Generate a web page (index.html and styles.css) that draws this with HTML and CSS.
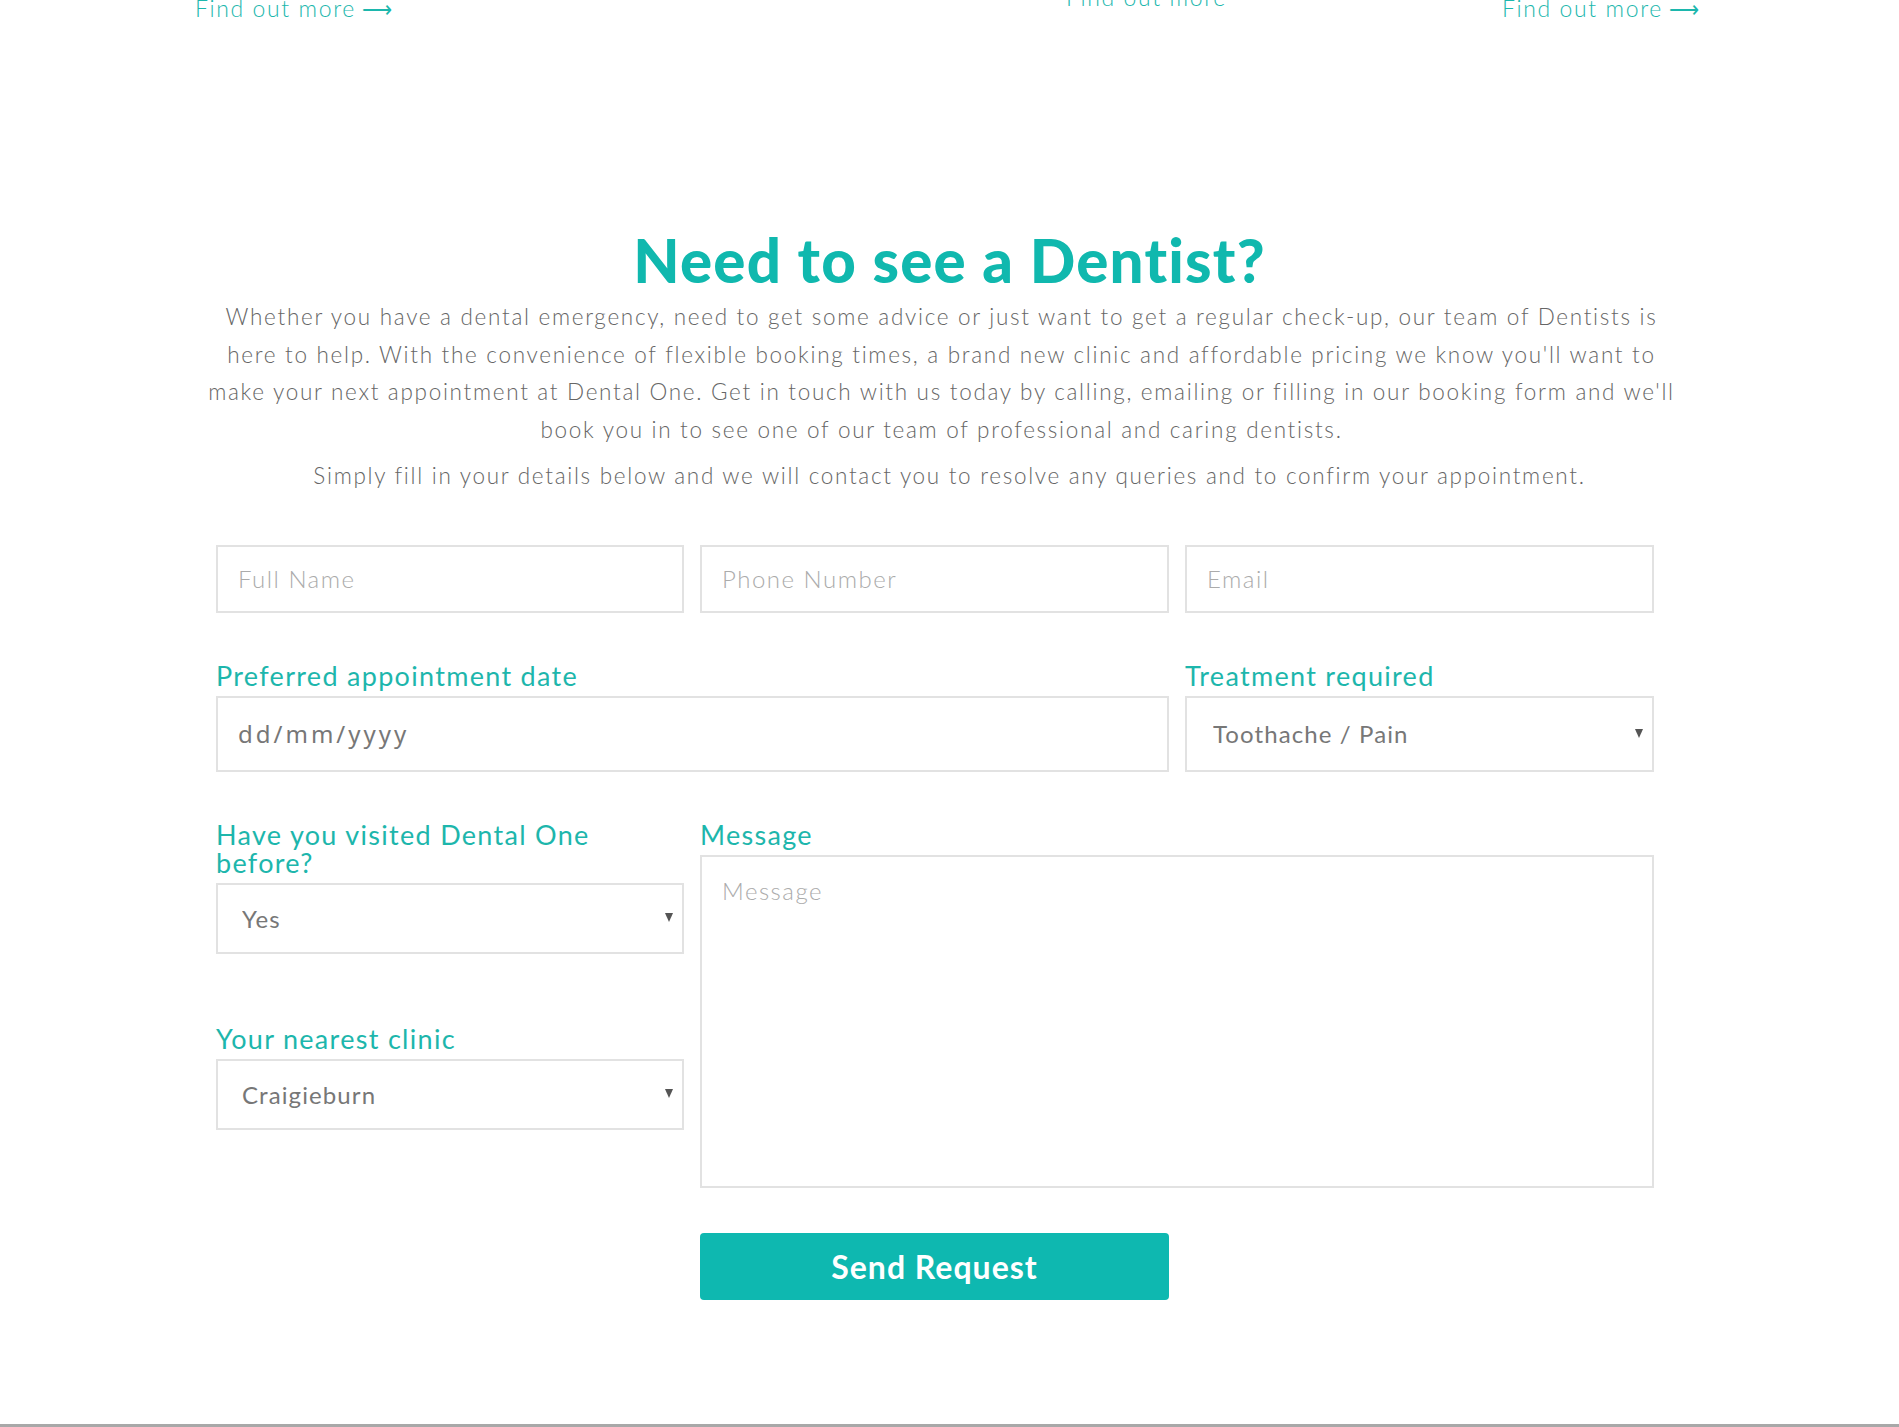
FILE: index.html
```html
<!DOCTYPE html>
<html lang="en">
<head>
<meta charset="utf-8">
<title>Need to see a Dentist?</title>
<link rel="stylesheet" href="styles.css">
</head>
<body>
<div class="links">
  <a class="more more-a" href="#">Find out more<span class="arrow">&#10230;</span></a>
  <a class="more more-b" href="#">Find out more</a>
  <a class="more more-c" href="#">Find out more<span class="arrow">&#10230;</span></a>
</div>

<section class="booking">
  <h1 class="title">Need to see a Dentist?</h1>
  <p class="intro intro-1">Whether you have a dental emergency, need to get some advice or just want to get a regular check-up, our team of Dentists is<br>here to help. With the convenience of flexible booking times, a brand new clinic and affordable pricing we know you'll want to<br>make your next appointment at Dental One. Get in touch with us today by calling, emailing or filling in our booking form and we'll<br>book you in to see one of our team of professional and caring dentists.</p>
  <p class="intro intro-2">Simply fill in your details below and we will contact you to resolve any queries and to confirm your appointment.</p>

  <form class="form">
    <div class="row row-1">
      <input class="field" type="text" placeholder="Full Name">
      <input class="field" type="text" placeholder="Phone Number">
      <input class="field" type="text" placeholder="Email">
    </div>

    <div class="row row-2">
      <div class="group span-2">
        <label class="label">Preferred appointment date</label>
        <input class="field field-date" type="text" placeholder="dd/mm/yyyy">
      </div>
      <div class="group">
        <label class="label">Treatment required</label>
        <div class="select select-tall">
          <select><option>Toothache / Pain</option><option>Check-up &amp; Clean</option></select>
        </div>
      </div>
    </div>

    <div class="row row-3">
      <div class="col-left">
        <div class="group">
          <label class="label">Have you visited Dental One before?</label>
          <div class="select"><select><option>Yes</option><option>No</option></select></div>
        </div>
        <div class="group group-clinic">
          <label class="label">Your nearest clinic</label>
          <div class="select"><select><option>Craigieburn</option></select></div>
        </div>
      </div>
      <div class="group span-2">
        <label class="label">Message</label>
        <textarea class="message" placeholder="Message"></textarea>
      </div>
    </div>

    <div class="row row-4">
      <button class="send" type="button">Send Request</button>
    </div>
  </form>
</section>
<div class="bottom-line"></div>
</body>
</html>
```

FILE: styles.css
```css
html, body {
  margin: 0;
  padding: 0;
  background: #ffffff;
}
body {
  font-family: Lato, "Open Sans", Arial, sans-serif;
  color: #6b6b6b;
  overflow: hidden;
  height: 1427px;
  display: flex;
  flex-direction: column;
}

/* top links row (cut off) */
.links {
  display: grid;
  grid-template-columns: 871px 436px auto;
  padding-left: 195px;
  height: 22px;
  align-items: start;
}
.more {
  font-family: Lato, sans-serif;
  font-weight: 300;
  font-size: 23px;
  line-height: 26px;
  color: #1cb7ad;
  text-decoration: none;
  letter-spacing: 1.6px;
  white-space: nowrap;
}
.arrow {
  font-family: "DejaVu Sans", sans-serif;
  font-size: 21px;
  letter-spacing: 0;
  margin-left: 6px;
}
.more-a, .more-c { margin-top: -5px; }
.more-b { margin-top: -16px; }

/* section */
.booking {
  padding-top: 202px;
  flex: 1;
}
.title {
  margin: 0;
  text-align: center;
  font-family: Lato, sans-serif;
  font-weight: 900;
  font-size: 60px;
  line-height: 72px;
  color: #10b8ae;
  letter-spacing: 1.2px;
}
.intro {
  margin: 2px auto 0;
  width: 1500px;
  box-sizing: border-box;
  text-align: center;
  font-family: Lato, sans-serif;
  font-weight: 300;
  font-size: 22.5px;
  line-height: 37.5px;
  color: #666666;
  letter-spacing: 1.7px;
}
.intro-1 { padding-right: 16px; }
.intro-2 { margin-top: 9px; }

/* form */
.form {
  margin: 50px 0 0 216px;
  width: 1438px;
  display: flex;
  flex-direction: column;
}
.row {
  display: grid;
  grid-template-columns: 468px 469px 1fr;
  column-gap: 16px;
}
.row-2, .row-3 { margin-top: 49px; }
.row-4 { margin-top: 45px; }
.span-2 { grid-column: span 2; }
.group {
  display: flex;
  flex-direction: column;
}
.col-left {
  display: flex;
  flex-direction: column;
}
.group-clinic { margin-top: 71px; }

.label {
  font-family: Lato, sans-serif;
  font-weight: 400;
  font-size: 27px;
  line-height: 28px;
  letter-spacing: 1.3px;
  color: #1db6ac;
  margin-bottom: 6px;
}

.field, .message, .select select {
  box-sizing: border-box;
  width: 100%;
  border: 2px solid #e2e2e2;
  border-radius: 0;
  background: #fff;
  outline: none;
  margin: 0;
}
.field {
  height: 68px;
  padding: 0 20px;
  font-family: Lato, sans-serif;
  font-weight: 300;
  font-size: 24px;
  letter-spacing: 1.5px;
  color: #6b6b6b;
}
.field::placeholder {
  color: #ababab;
}
.field-date {
  height: 76px;
  font-family: "Noto Sans", sans-serif;
  font-weight: 400;
  font-size: 24px;
  letter-spacing: 3px;
}
.field-date::placeholder {
  color: #777777;
}

.select {
  position: relative;
}
.select select {
  -webkit-appearance: none;
  appearance: none;
  height: 71px;
  padding: 0 40px 0 24px;
  font-family: Lato, sans-serif;
  font-weight: 400;
  font-size: 24px;
  letter-spacing: 1.1px;
  color: #777777;
}
.select-tall select {
  height: 76px;
  padding-left: 26px;
}
.select::after {
  content: "";
  position: absolute;
  right: 11px;
  top: 50%;
  margin-top: -5px;
  border-left: 4px solid transparent;
  border-right: 4px solid transparent;
  border-top: 9px solid #555555;
  pointer-events: none;
}

.message {
  height: 333px;
  resize: none;
  padding: 20px 20px;
  font-family: Lato, sans-serif;
  font-weight: 300;
  font-size: 24px;
  letter-spacing: 1.5px;
  line-height: 28px;
  color: #6b6b6b;
}
.message::placeholder {
  color: #ababab;
}

.send {
  grid-column: 2;
  height: 67px;
  border: none;
  border-radius: 4px;
  background: #0eb8b0;
  color: #ffffff;
  font-family: Lato, sans-serif;
  font-weight: 700;
  font-size: 32px;
  letter-spacing: 1px;
  cursor: pointer;
}

.bottom-line {
  height: 3px;
  background: #a8a8a8;
  margin-bottom: 0;
}
```
